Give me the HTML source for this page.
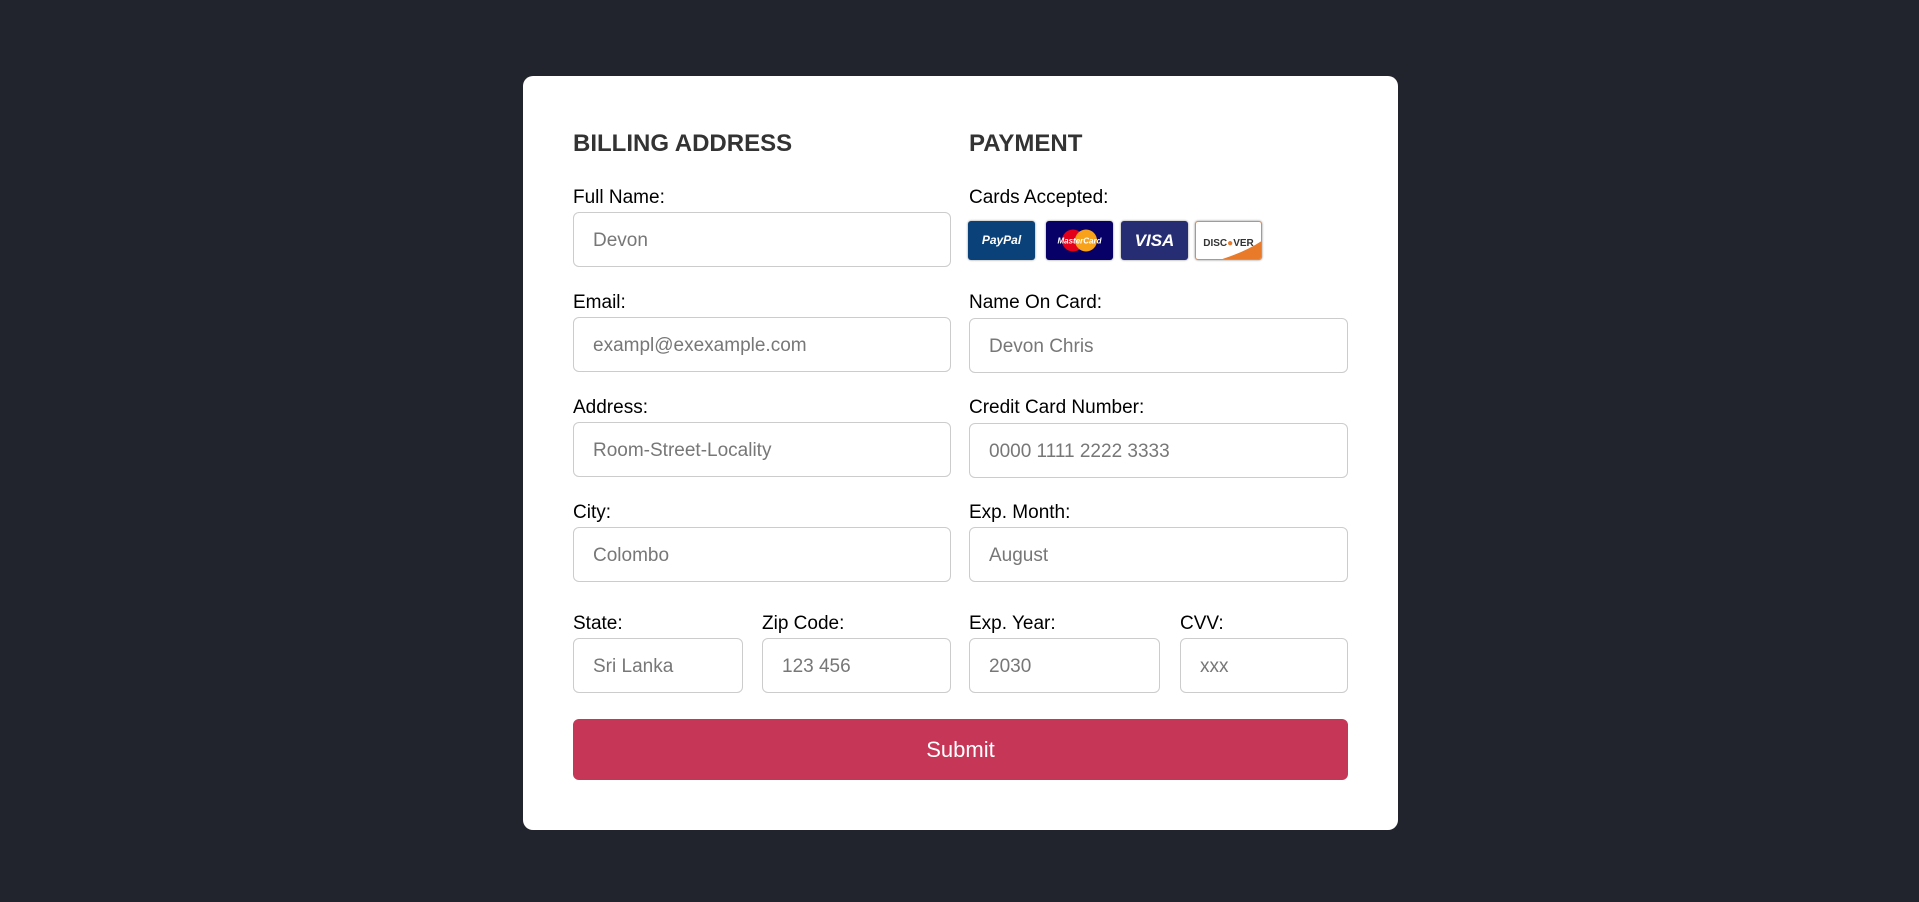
<!DOCTYPE html>
<html><head><meta charset="utf-8"><style>
*{box-sizing:border-box;margin:0;padding:0}
body{width:1919px;height:902px;background:#21242d;font-family:"Liberation Sans",sans-serif;position:relative;overflow:hidden}
.card{position:absolute;left:523px;top:76px;width:875px;height:754px;background:#fff;border-radius:10px}
h3{position:absolute;font-size:24px;font-weight:bold;color:#333;line-height:30px}
.l{position:absolute;font-size:19px;color:#000;line-height:22px}
.i{position:absolute;height:55px;border:1px solid #ccc;border-radius:6px;font-size:19px;color:#777;padding-left:19px;line-height:55px}
.btn{position:absolute;left:573px;top:719px;width:775px;height:61px;background:#c63657;border-radius:6px;color:#fff;font-size:22px;text-align:center;line-height:61px}
.c{position:absolute;top:221px;width:67px;height:39px;border-radius:3px;box-shadow:0 0 2px #888;overflow:hidden;font-weight:bold;font-style:italic;text-align:center;line-height:39px;color:#fff}
</style></head><body>
<div class="card"></div>
<h3 style="left:573px;top:129px">BILLING ADDRESS</h3>
<h3 style="left:969px;top:129px">PAYMENT</h3>

<div class="l" style="left:573px;top:187px">Full Name:</div>
<div class="i" style="left:573px;top:212px;width:378px">Devon</div>
<div class="l" style="left:573px;top:292px">Email:</div>
<div class="i" style="left:573px;top:317px;width:378px">exampl@exexample.com</div>
<div class="l" style="left:573px;top:397px">Address:</div>
<div class="i" style="left:573px;top:422px;width:378px">Room-Street-Locality</div>
<div class="l" style="left:573px;top:502px">City:</div>
<div class="i" style="left:573px;top:527px;width:378px">Colombo</div>
<div class="l" style="left:573px;top:613px">State:</div>
<div class="i" style="left:573px;top:638px;width:170px">Sri Lanka</div>
<div class="l" style="left:762px;top:613px">Zip Code:</div>
<div class="i" style="left:762px;top:638px;width:189px">123 456</div>

<div class="l" style="left:969px;top:187px">Cards Accepted:</div>
<div class="c" style="left:968px;background:#0b4179;font-size:12px">PayPal</div>
<div class="c" style="left:1046px;background:#070066">
<svg width="67" height="39"><circle cx="27" cy="19.5" r="11" fill="#e2001a"/><circle cx="40" cy="19.5" r="11" fill="#f8a21c"/><text x="33.5" y="22.5" font-size="8" fill="#fff" text-anchor="middle" font-family="Liberation Sans" font-style="italic" font-weight="bold">MasterCard</text></svg></div>
<div class="c" style="left:1121px;background:#262d73;font-size:17px">VISA</div>
<div class="c" style="left:1195px;background:#fff;border:1px solid #d88c5a">
<svg width="67" height="39" style="position:absolute;left:0;top:0"><path d="M20 39 Q50 30 67 18 L67 39Z" fill="#e87a2a"/></svg>
<span style="position:relative;color:#333;font-size:10px;font-style:normal;line-height:30px">DISC<span style="color:#e87a2a">●</span>VER</span></div>

<div class="l" style="left:969px;top:292px">Name On Card:</div>
<div class="i" style="left:969px;top:318px;width:379px">Devon Chris</div>
<div class="l" style="left:969px;top:397px">Credit Card Number:</div>
<div class="i" style="left:969px;top:423px;width:379px">0000 1111 2222 3333</div>
<div class="l" style="left:969px;top:502px">Exp. Month:</div>
<div class="i" style="left:969px;top:527px;width:379px">August</div>
<div class="l" style="left:969px;top:613px">Exp. Year:</div>
<div class="i" style="left:969px;top:638px;width:191px">2030</div>
<div class="l" style="left:1180px;top:613px">CVV:</div>
<div class="i" style="left:1180px;top:638px;width:168px">xxx</div>

<div class="btn">Submit</div>
</body></html>
